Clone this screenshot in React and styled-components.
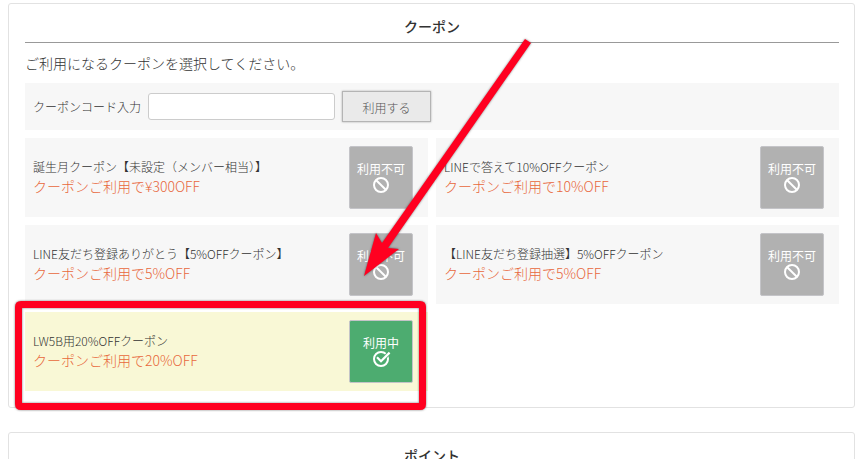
import React, { useState } from "react";
import styled, { createGlobalStyle } from "styled-components";

const GlobalStyle = createGlobalStyle`
  * {
    box-sizing: border-box;
  }

  body {
    margin: 0;
    background: #fff;
    color: #333;
    font-family: "Noto Sans CJK JP", "Noto Sans", sans-serif;
    font-size: 12px;
    font-weight: 300;
  }

  button,
  input {
    font: inherit;
  }
`;

const Page = styled.main`
  position: relative;
  height: 100vh;
  overflow: hidden;
  padding: 3px 12px 0 8px;
  display: flex;
  flex-direction: column;
  gap: 24px;
`;

const Panel = styled.section`
  flex: none;
  padding: 10px 15px 16px 16px;
  border: 1px solid #e2e2e2;
  border-radius: 3px;
`;

const PanelTitle = styled.h2`
  margin: 0;
  padding-bottom: 4px;
  border-bottom: 1px solid #999;
  font-size: 14px;
  font-weight: 500;
  line-height: 24px;
  text-align: center;
`;

const Lead = styled.p`
  margin: 8px 0;
  font-size: 14px;
  line-height: 24px;
`;

const CodeForm = styled.form`
  display: flex;
  align-items: center;
  gap: 7px;
  padding: 8px;
  margin-bottom: 8px;
  background: #f7f7f7;
`;

const CodeLabel = styled.label`
  line-height: 20px;
`;

const CodeInput = styled.input`
  width: 187px;
  height: 27px;
  padding: 0 8px;
  border: 1px solid #ccc;
  border-radius: 3px;
  background: #fff;
`;

const SubmitButton = styled.button`
  width: 89px;
  height: 31px;
  padding: 2px 0 0;
  border: 1px solid #b4b4b4;
  background: #eaeaea;
  box-shadow: 0 0 2px rgba(0, 0, 0, 0.3);
  color: #555;
  cursor: pointer;
`;

const CouponList = styled.ul`
  display: grid;
  grid-template-columns: 1fr 1fr;
  gap: 8px;
  margin: 0;
  padding: 0;
  list-style: none;
`;

const CouponCard = styled.li`
  display: flex;
  align-items: center;
  justify-content: space-between;
  padding: 8px 15px 8px 8px;
  background: ${(props) => (props.$active ? "#f9f8d6" : "#f7f7f7")};
`;

const CouponText = styled.div`
  padding-bottom: 3px;
`;

const CouponName = styled.h3`
  margin: 0;
  font-size: 12px;
  font-weight: 300;
  line-height: 19px;
`;

const CouponValue = styled.p`
  margin: 0;
  color: #e8683c;
  font-size: 14px;
  line-height: 20px;
`;

const StatusButton = styled.button`
  display: flex;
  flex: none;
  flex-direction: column;
  align-items: center;
  justify-content: center;
  width: 64px;
  height: 63px;
  padding: 0 0 3px;
  border: 1px solid #c4c4c8;
  border-radius: 2px;
  background: ${(props) => (props.$active ? "#4dac70" : "#b1b1b1")};
  color: #fff;
  font-weight: 400;
  line-height: 17px;
`;

const Icon = styled.svg`
  display: block;
  width: 16px;
  height: 16px;
  overflow: visible;
`;

const Annotation = styled.svg`
  position: absolute;
  top: 0;
  left: 0;
  width: 867px;
  height: 459px;
  pointer-events: none;
  filter: drop-shadow(0 0 1px rgba(0, 0, 0, 0.5));
`;

const coupons = [
  { name: "誕生月クーポン【未設定（メンバー相当）】", value: "¥300OFF" },
  { name: "LINEで答えて10%OFFクーポン", value: "10%OFF" },
  { name: "LINE友だち登録ありがとう【5%OFFクーポン】", value: "5%OFF" },
  { name: "【LINE友だち登録抽選】5%OFFクーポン", value: "5%OFF" },
  { name: "LW5B用20%OFFクーポン", value: "20%OFF", active: true },
];

function BanIcon() {
  return (
    <Icon viewBox="0 0 16 16" fill="none" stroke="#fff" strokeWidth="2" aria-hidden="true">
      <circle cx="8" cy="8" r="7" />
      <path d="M3.2 3.2l9.6 9.6" />
    </Icon>
  );
}

function CheckIcon() {
  return (
    <Icon viewBox="0 0 16 16" fill="none" stroke="#fff" strokeWidth="2" aria-hidden="true">
      <circle cx="8" cy="8" r="7" />
      <path d="M4 6.2l4 4 8.6-8.6" stroke="#4dac70" strokeWidth="3.8" />
      <path d="M4 6.2l4 4 8.6-8.6" strokeWidth="2.2" />
    </Icon>
  );
}

function Coupon({ name, value, active }) {
  return (
    <CouponCard $active={active}>
      <CouponText>
        <CouponName>{name}</CouponName>
        <CouponValue>クーポンご利用で{value}</CouponValue>
      </CouponText>
      <StatusButton type="button" $active={active}>
        {active ? "利用中" : "利用不可"}
        {active ? <CheckIcon /> : <BanIcon />}
      </StatusButton>
    </CouponCard>
  );
}

export default function App() {
  const [code, setCode] = useState("");

  return (
    <>
      <GlobalStyle />
      <Page lang="ja">
        <Panel>
          <PanelTitle>クーポン</PanelTitle>
          <Lead>ご利用になるクーポンを選択してください。</Lead>
          <CodeForm onSubmit={(e) => e.preventDefault()}>
            <CodeLabel htmlFor="coupon-code">クーポンコード入力</CodeLabel>
            <CodeInput
              id="coupon-code"
              type="text"
              value={code}
              onChange={(e) => setCode(e.target.value)}
            />
            <SubmitButton type="submit">利用する</SubmitButton>
          </CodeForm>
          <CouponList>
            {coupons.map((coupon) => (
              <Coupon key={coupon.name} {...coupon} />
            ))}
          </CouponList>
        </Panel>
        <Panel>
          <PanelTitle>ポイント</PanelTitle>
        </Panel>
        <Annotation viewBox="0 0 867 459" aria-hidden="true">
          <path
            fillRule="evenodd"
            d="M21 301H420Q426 301 426 307V404Q426 410 420 410H21Q15 410 15 404V307Q15 301 21 301ZM22 308V403H419V308Z"
            fill="#ff0020"
          />
          <path
            d="M525 39L531 43L388 248L399 249L364 276L376 233L382 243Z"
            fill="#ff0020"
          />
        </Annotation>
      </Page>
    </>
  );
}
